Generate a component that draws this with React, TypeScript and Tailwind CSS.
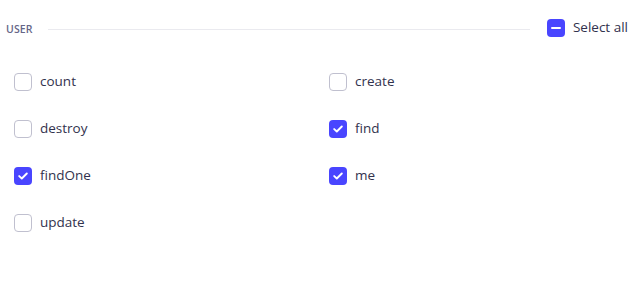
import React from "react";

function Box({ state }: { state: "off" | "on" | "mixed" }) {
  if (state === "off") {
    return <span className="block w-[18px] h-[18px] rounded-[4px] border border-[#c0c0cf] bg-white shrink-0" />;
  }
  return (
    <span className="flex items-center justify-center w-[18px] h-[18px] rounded-[4px] bg-[#4945ff] shrink-0">
      {state === "on" ? (
        <svg width="10" height="8" viewBox="0 0 10 8" fill="none">
          <path d="M1.2 4.1 L3.8 6.5 L8.8 1.5" stroke="white" strokeWidth="1.9" strokeLinecap="round" strokeLinejoin="round" />
        </svg>
      ) : (
        <span className="block w-[10px] h-[2px] bg-white rounded-sm" />
      )}
    </span>
  );
}

function Item({ label, checked }: { label: string; checked?: boolean }) {
  return (
    <div className="flex items-center gap-[8px] h-[18px]">
      <Box state={checked ? "on" : "off"} />
      <span className="text-[13.5px] text-[#32324d] leading-none">{label}</span>
    </div>
  );
}

export default function App() {
  return (
    <div className="w-[637px] h-[282px] bg-white pt-[19px]" style={{ fontFamily: '"Open Sans", "Noto Sans", sans-serif' }}>
      <div className="flex items-center h-[18px] pl-[6px] pr-[9px]">
        <span className="text-[10.5px] font-semibold text-[#666687] uppercase tracking-[0.01em] leading-none mt-[2px]">User</span>
        <div className="flex-1 h-px bg-[#eaeaef] ml-[15px] mr-[17px] mt-[2px]" />
        <div className="flex items-center gap-[8px]">
          <Box state="mixed" />
          <span className="text-[13.5px] text-[#32324d] leading-none">Select all</span>
        </div>
      </div>
      <div className="grid grid-cols-[315px_1fr] pl-[14px] pt-[36px] gap-y-[29px]">
        <Item label="count" />
        <Item label="create" />
        <Item label="destroy" />
        <Item label="find" checked />
        <Item label="findOne" checked />
        <Item label="me" checked />
        <Item label="update" />
      </div>
    </div>
  );
}
